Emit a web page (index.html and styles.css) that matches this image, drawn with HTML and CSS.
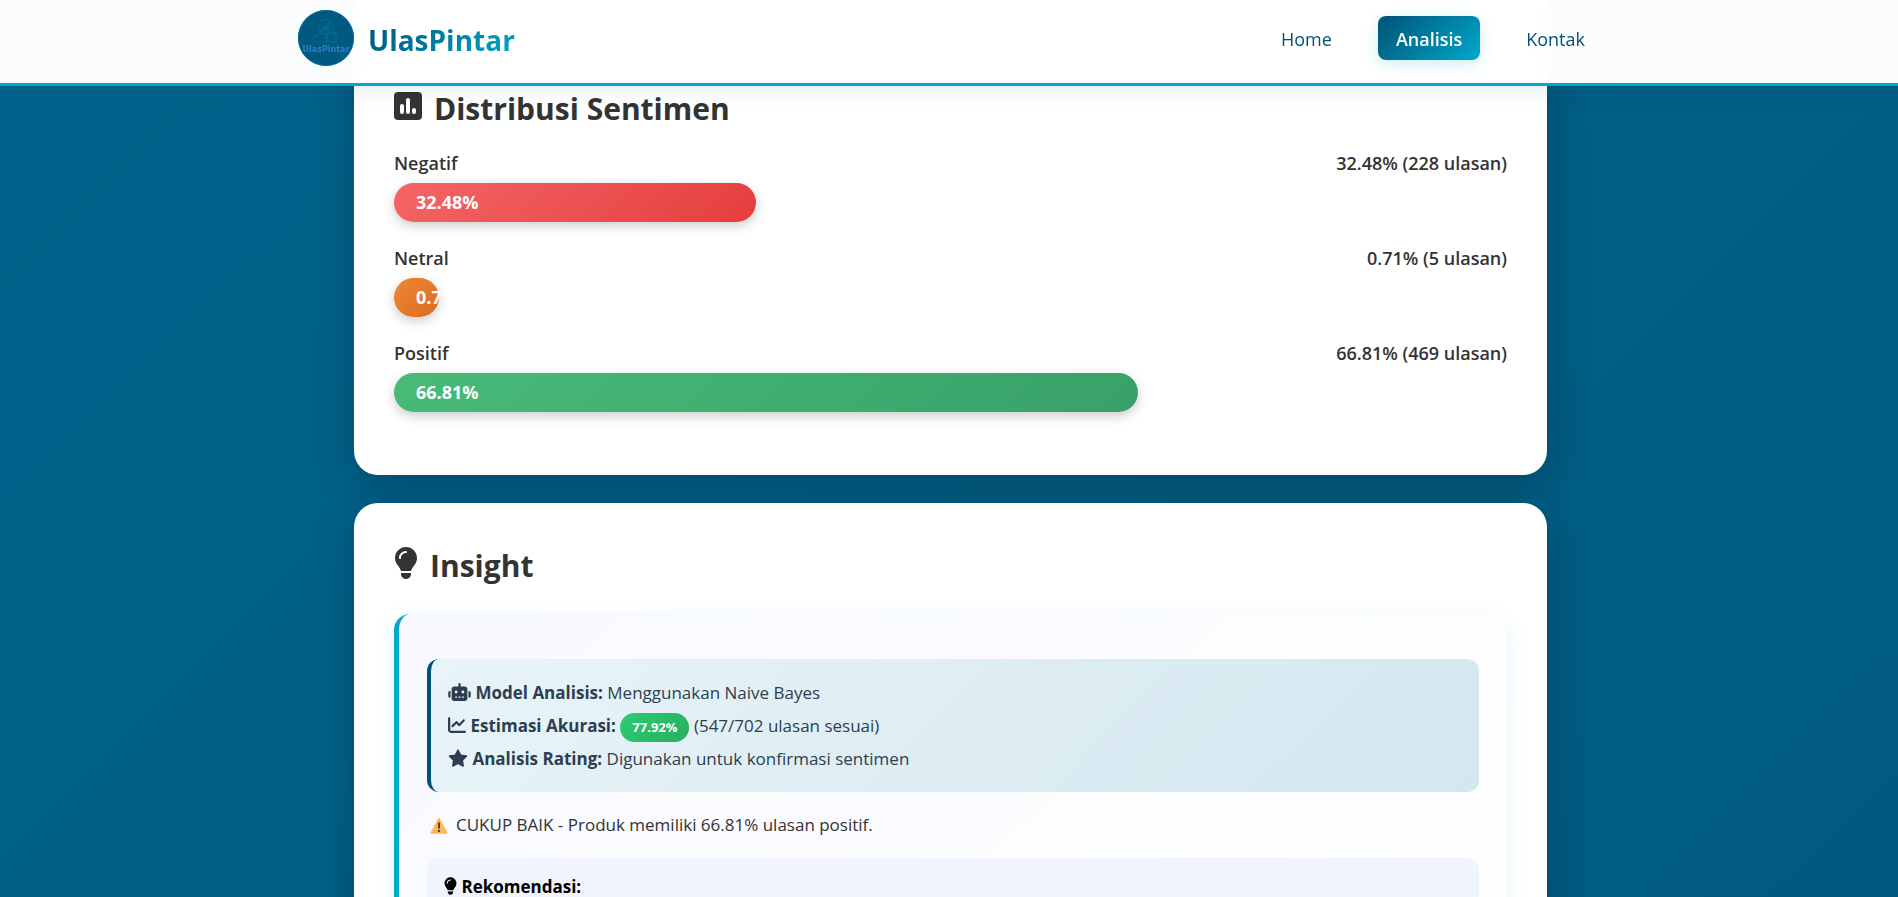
FILE: index.html
```
<!DOCTYPE html>
<html lang="id">
<head>
  <meta charset="UTF-8" />
  <meta name="viewport" content="width=device-width, initial-scale=1.0" />
  <title>UlasPintar - Analisis</title>
  <link rel="stylesheet" href="styles.css">
</head>
<body>
  <svg width="0" height="0" class="sprite" aria-hidden="true">
    <symbol id="bulb" viewBox="0 0 384 512">
      <path d="M272 384c9.6-31.9 29.5-59.1 49.2-86.2l0 0c5.2-7.1 10.4-14.2 15.4-21.4c19.8-28.5 31.4-63 31.4-100.3C368 78.8 289.2 0 192 0S16 78.8 16 176c0 37.3 11.6 71.9 31.4 100.3c5 7.2 10.2 14.3 15.4 21.4l0 0c19.8 27.1 39.7 54.4 49.2 86.2H272zM192 512c44.2 0 80-35.8 80-80V416H112v16c0 44.2 35.8 80 80 80zM112 176c0 8.8-7.2 16-16 16s-16-7.2-16-16c0-61.9 50.1-112 112-112c8.8 0 16 7.2 16 16s-7.2 16-16 16c-44.2 0-80 35.8-80 80z"/>
    </symbol>
  </svg>

  <header class="navbar">
    <div class="nav-container">
      <a class="brand" href="index.html">
        <svg class="logo" viewBox="0 0 56 56" aria-hidden="true">
          <circle cx="28" cy="28" r="28" fill="#005a80"/>
          <circle cx="28" cy="28" r="27.5" fill="none" stroke="#0b6aa0"/>
          <g fill="none" stroke="#08708f" stroke-width="1">
            <circle cx="28" cy="17" r="7.5"/>
            <path d="M22.500 22.500l-4 4M18.500 25.500l-2 2.500M24 21v-3h2v3M27 21v-5h2v5M30 21v-8h2v8"/>
            <path d="M29 23h9v9h-9zM29 28h-2M38 25l-2-2"/>
          </g>
          <text x="28" y="42" text-anchor="middle">UlasPintar</text>
        </svg>
        <span class="brand-name">UlasPintar</span>
      </a>
      <nav>
        <a href="index.html">Home</a>
        <a href="analisis.html" class="active">Analisis</a>
        <a href="kontak.html">Kontak</a>
      </nav>
    </div>
  </header>

  <main class="container">
    <section class="card card-top">
      <h2>
        <svg class="icon-poll" viewBox="0 0 28 28" aria-hidden="true">
          <rect width="28" height="28" rx="4" fill="#333"/>
          <g fill="#fff">
            <rect x="6" y="12" width="4" height="10" rx="2"/>
            <rect x="12" y="6" width="4" height="16" rx="2"/>
            <rect x="18" y="16" width="4" height="6" rx="2"/>
          </g>
        </svg>
        Distribusi Sentimen
      </h2>
      <div class="sentiment">
        <div class="sentiment-label"><span>Negatif</span><span>32.48% (228 ulasan)</span></div>
        <div class="bar negatif" style="width: 32.48%">32.48%</div>
      </div>
      <div class="sentiment">
        <div class="sentiment-label"><span>Netral</span><span>0.71% (5 ulasan)</span></div>
        <div class="bar netral" style="width: 0.71%">0.71%</div>
      </div>
      <div class="sentiment">
        <div class="sentiment-label"><span>Positif</span><span>66.81% (469 ulasan)</span></div>
        <div class="bar positif" style="width: 66.81%">66.81%</div>
      </div>
    </section>

    <section class="card">
      <h2>
        <svg class="icon-bulb" aria-hidden="true"><use href="#bulb"/></svg>
        Insight
      </h2>
      <div class="insight">
        <div class="model-info">
          <p>
            <svg class="icon-robot" viewBox="0 0 640 512" aria-hidden="true"><path d="M320 0c17.7 0 32 14.3 32 32V96H472c39.8 0 72 32.2 72 72V440c0 39.8-32.2 72-72 72H168c-39.8 0-72-32.2-72-72V168c0-39.8 32.2-72 72-72H288V32c0-17.7 14.3-32 32-32zM208 384c-8.8 0-16 7.2-16 16s7.2 16 16 16h32c8.8 0 16-7.2 16-16s-7.2-16-16-16H208zm96 0c-8.8 0-16 7.2-16 16s7.2 16 16 16h32c8.8 0 16-7.2 16-16s-7.2-16-16-16H304zm96 0c-8.8 0-16 7.2-16 16s7.2 16 16 16h32c8.8 0 16-7.2 16-16s-7.2-16-16-16H400zM264 256a40 40 0 1 0 -80 0 40 40 0 1 0 80 0zm152 40a40 40 0 1 0 0-80 40 40 0 1 0 0 80zM48 224H64V416H48c-26.5 0-48-21.5-48-48V272c0-26.5 21.5-48 48-48zm544 0c26.5 0 48 21.5 48 48v96c0 26.5-21.5 48-48 48H576V224h16z"/></svg>
            <strong>Model Analisis:</strong> Menggunakan Naive Bayes
          </p>
          <p>
            <svg class="icon-chart" viewBox="0 0 512 512" aria-hidden="true"><path d="M64 64c0-17.7-14.3-32-32-32S0 46.3 0 64V400c0 44.2 35.8 80 80 80H480c17.7 0 32-14.3 32-32s-14.3-32-32-32H80c-8.8 0-16-7.2-16-16V64zm406.6 86.6c12.5-12.5 12.5-32.8 0-45.3s-32.8-12.5-45.3 0L320 210.7l-57.4-57.4c-12.5-12.5-32.8-12.5-45.3 0l-112 112c-12.5 12.5-12.5 32.8 0 45.3s32.8 12.5 45.3 0L240 221.3l57.4 57.4c12.5 12.5 32.8 12.5 45.3 0l128-128z"/></svg>
            <strong>Estimasi Akurasi:</strong> <span class="badge">77.92%</span> (547/702 ulasan sesuai)
          </p>
          <p>
            <svg class="icon-star" viewBox="0 0 20 18" aria-hidden="true"><path d="M10 1l2.600 5.200 5.800.9-4.100 4.100.9 5.800-5.200-2.700-5.200 2.700.9-5.800-4.100-4.100 5.800-.9z" stroke="#2c3e50" stroke-width="1.500" stroke-linejoin="round"/></svg>
            <strong>Analisis Rating:</strong> Digunakan untuk konfirmasi sentimen
          </p>
        </div>

        <p class="verdict">
          <svg class="icon-warning" viewBox="0 0 18 17" aria-hidden="true">
            <path d="M9 1.500L16.800 16H1.200z" fill="#ffb655" stroke="#ffb655" stroke-width="1.500" stroke-linejoin="round"/>
            <path d="M9 5.500v6" stroke="#4a4038" stroke-width="2"/>
            <circle cx="9" cy="14" r="1.200" fill="#4a4038"/>
          </svg>
          CUKUP BAIK - Produk memiliki 66.81% ulasan positif.
        </p>

        <div class="rekomendasi">
          <h3><svg class="icon-bulb-small" aria-hidden="true"><use href="#bulb"/></svg> Rekomendasi:</h3>
        </div>
      </div>
    </section>
  </main>
</body>
</html>
```
FILE: styles.css
```
:root {
  --primary: #005377;
  --accent: #00a8cc;
  --text: #333333;
  --slate: #2c3e50;
  --white: #ffffff;
}

* {
  margin: 0;
  padding: 0;
  box-sizing: border-box;
}

body {
  font-family: 'Segoe UI', 'Open Sans', sans-serif;
  font-size: 17px;
  line-height: 26px;
  color: var(--text);
  background: linear-gradient(135deg, #00648c, #005a80);
  height: 100vh;
  overflow: hidden;
}

.sprite {
  position: absolute;
}

.navbar {
  position: fixed;
  top: 0;
  left: 0;
  right: 0;
  z-index: 1000;
  padding: 10px 24px 17px;
  background: rgba(255, 255, 255, 0.98);
  backdrop-filter: blur(20px);
  border-bottom: 3px solid var(--accent);
  box-shadow: 0 4px 20px rgba(0, 83, 119, 0.1);
}

.nav-container {
  display: flex;
  justify-content: space-between;
  align-items: center;
  max-width: 1308px;
  margin: 0 auto;
  padding-left: 3px;
}

.brand {
  display: flex;
  align-items: center;
  gap: 14px;
  text-decoration: none;
}

.logo {
  width: 56px;
  height: 56px;
}

.logo text {
  font-family: 'DejaVu Sans', sans-serif;
  font-size: 8px;
  font-weight: 700;
  fill: #2480c8;
}

.brand-name {
  padding-top: 4px;
  font-size: 28px;
  line-height: 40px;
  font-weight: 700;
  background: linear-gradient(135deg, var(--primary), var(--accent));
  background-clip: text;
  -webkit-background-clip: text;
  color: transparent;
}

nav {
  display: flex;
  gap: 28px;
}

nav a {
  padding: 10px 18px 8px;
  border-radius: 8px;
  color: var(--primary);
  font-size: 18px;
  font-weight: 500;
  text-decoration: none;
}

nav a.active {
  color: var(--white);
  font-weight: 600;
  background: linear-gradient(135deg, var(--primary), var(--accent));
  box-shadow: 0 4px 15px rgba(0, 168, 204, 0.2);
}

.container {
  max-width: 1196px;
  margin: 0 auto;
  padding-left: 3px;
}

.card {
  background: var(--white);
  border-radius: 24px;
  padding: 40px;
  margin-bottom: 28px;
  box-shadow: 0 10px 40px rgba(0, 0, 0, 0.22);
}

.card-top {
  border-radius: 0 0 24px 24px;
  padding-top: 86px;
}

h2 {
  display: flex;
  align-items: center;
  gap: 12px;
  margin-bottom: 18px;
  font-size: 30px;
  line-height: 46px;
  font-weight: 700;
}

h2 svg {
  margin-bottom: 6px;
}

.icon-poll {
  width: 28px;
  height: 28px;
}

.icon-bulb {
  width: 24px;
  height: 32px;
  fill: var(--text);
}

.sentiment {
  margin-bottom: 23px;
}

.sentiment-label {
  display: flex;
  justify-content: space-between;
  margin-bottom: 7px;
  font-size: 18px;
  font-weight: 600;
}

.bar {
  min-width: 45px;
  height: 39px;
  padding-left: 22px;
  border-radius: 20px;
  color: var(--white);
  font-size: 18px;
  font-weight: 700;
  line-height: 39px;
  box-shadow: 0 4px 12px rgba(0, 0, 0, 0.2);
}

.negatif {
  background: linear-gradient(135deg, #f56565, #e53e3e);
}

.netral {
  background: linear-gradient(135deg, #ed8936, #dd6b20);
}

.positif {
  background: linear-gradient(135deg, #48bb78, #38a169);
}

.insight {
  margin-top: 25px;
  padding: 45px 28px;
  border-left: 5px solid var(--accent);
  border-radius: 16px;
  background: linear-gradient(135deg, #f8f9ff, #ffffff);
  box-shadow: 0 4px 20px rgba(0, 168, 204, 0.1);
}

.model-info {
  margin-bottom: 20px;
  padding: 17px;
  border-left: 4px solid var(--primary);
  border-radius: 12px;
  color: var(--slate);
  fill: var(--slate);
  background: linear-gradient(135deg, #e8f4f8, #d4e6ef);
}

.model-info p {
  line-height: 33px;
}

.model-info svg {
  height: 18px;
  vertical-align: -2px;
}

.icon-robot {
  width: 23px;
}

.icon-chart {
  width: 18px;
}

.icon-star {
  width: 20px;
}

.badge {
  display: inline-block;
  padding: 0 12px;
  border-radius: 20px;
  color: var(--white);
  font-size: 13px;
  font-weight: 700;
  line-height: 29px;
  background: linear-gradient(135deg, #2ecc71, #27ae60);
}

.verdict {
  display: flex;
  align-items: center;
  gap: 8px;
  margin-bottom: 20px;
  padding-left: 3px;
}

.icon-warning {
  width: 18px;
  height: 17px;
}

.rekomendasi {
  padding: 16px 17px;
  border-radius: 12px;
  color: #000;
  background: #f0f4ff;
}

.rekomendasi h3 {
  font-size: 17px;
  line-height: 26px;
  font-weight: 700;
}

.icon-bulb-small {
  width: 13px;
  height: 18px;
  vertical-align: -2px;
}
```
